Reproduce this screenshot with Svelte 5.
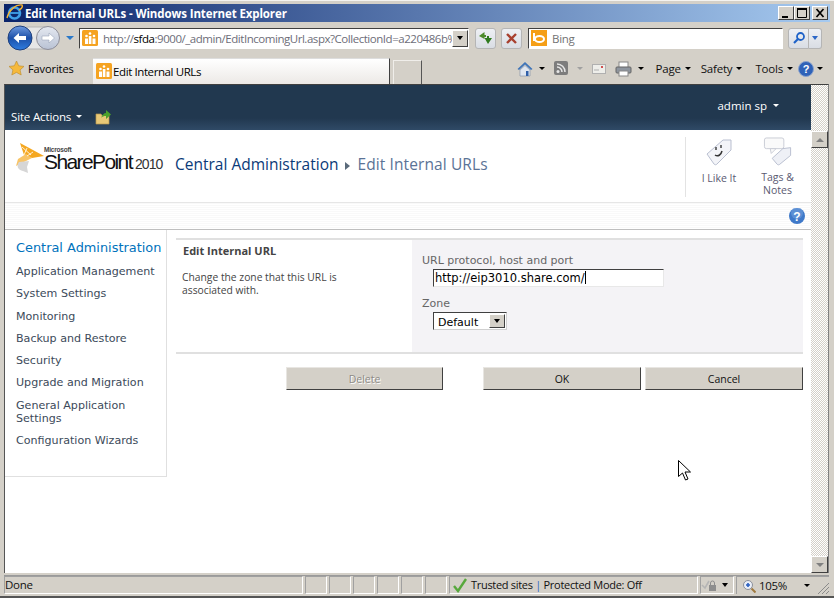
<script lang="ts">
  const nav = [
    'Application Management',
    'System Settings',
    'Monitoring',
    'Backup and Restore',
    'Security',
    'Upgrade and Migration',
    'General Application Settings',
    'Configuration Wizards'
  ]
  const statusCells = [0, 1, 2, 3, 4, 5]
</script>

<style>
  :global(body) { margin: 0; background: #d4d0c8; }
  .window {
    width: 834px;
    height: 598px;
    box-sizing: border-box;
    padding: 4px 5px 0 4px;
    background: #d4d0c8;
    border-top: 1px solid #f4f3f0;
    border-bottom: 2px solid #555;
    display: flex;
    flex-direction: column;
    position: relative;
    overflow: hidden;
    font-family: "Open Sans", "Noto Sans", sans-serif;
    letter-spacing: -0.3px;
    color: #000;
  }

  .titlebar {
    height: 18px;
    flex: none;
    margin: -1px -1px 0 0;
    display: flex;
    align-items: center;
    background: linear-gradient(90deg, #0a246a, #a6caf0);
    color: #fff;
    font: bold 11.5px "Open Sans", sans-serif;
    letter-spacing: -0.11px;
  }
  .ie { width: 17px; height: 18px; margin: -2px 2px 0 2px; flex: none; }
  .winbtns { margin-left: auto; display: flex; margin-right: 2px; }
  .winbtn {
    width: 16px; height: 14px;
    box-sizing: border-box;
    background: #d4d0c8;
    border: 1px solid;
    border-color: #fff #404040 #404040 #fff;
    display: block;
  }
  .winbtn svg { display: block; }
  .winbtn.close { margin-left: 2px; }

  .addressbar {
    height: 32px;
    flex: none;
    display: flex;
    align-items: center;
  }
  .nav-orb { width: 73px; height: 28px; flex: none; margin: 0 1px; }
  .address {
    width: 390px;
    height: 21px;
    box-sizing: border-box;
    background: #fff;
    border: 1px solid;
    border-color: #404040 #fff #fff #404040;
    display: flex;
    align-items: center;
    font-size: 11.5px;
    color: #6d6d78;
    white-space: nowrap;
    overflow: hidden;
  }
  .address .url { flex: 1; min-width: 0; margin-left: 5px; letter-spacing: -0.46px; }
  .address b { font-weight: 400; color: #000; }
  .fav { width: 16px; height: 16px; flex: none; margin-left: 2px; }
  .combo {
    width: 16px; height: 17px;
    flex: none;
    box-sizing: border-box;
    background: #d4d0c8;
    border: 1px solid;
    border-color: #fff #404040 #404040 #fff;
    display: flex;
    align-items: center;
    justify-content: center;
  }
  .arrow {
    width: 0; height: 0;
    border: 3px solid transparent;
    border-top: 4px solid #000;
    border-bottom: 0;
    display: inline-block;
  }
  .toolbtn {
    width: 21px; height: 21px;
    flex: none;
    box-sizing: border-box;
    border: 1px solid #b5b5b5;
    border-radius: 3px;
    background: linear-gradient(#eef0f4, #d9dde4);
    display: flex;
    align-items: center;
    justify-content: center;
  }
  .refresh { margin-left: 6px; }
  .stop { margin-left: 5px; }
  .search {
    width: 255px;
    height: 21px;
    box-sizing: border-box;
    margin-left: 6px;
    background: #fff;
    border: 1px solid;
    border-color: #404040 #fff #fff #404040;
    display: flex;
    align-items: center;
    font-size: 11.5px;
    color: #737373;
  }
  .search svg { margin: 0 5px 0 2px; }
  .searchgo { margin-left: 5px; width: 21px; border-radius: 3px 0 0 3px; }
  .searchdrop { width: 13px; border-left: 0; border-radius: 0 3px 3px 0; }
  .searchdrop .arrow { border-top-color: #2c67c7; }

  .tabrow {
    height: 30px;
    flex: none;
    display: flex;
    align-items: flex-end;
    font-size: 11.5px;
  }
  .favorites {
    width: 89px;
    height: 30px;
    flex: none;
    display: flex;
    align-items: center;
    gap: 4px;
    padding: 0 0 2px 5px;
    box-sizing: border-box;
    font-size: 11px;
    letter-spacing: -0.1px;
  }
  .tab {
    width: 297px;
    height: 26px;
    flex: none;
    box-sizing: border-box;
    background: linear-gradient(#fff, #ece9e6);
    border-right: 1px solid #404040;
    border-top: 1px solid #ddd;
    display: flex;
    align-items: center;
    gap: 1px;
    padding: 0 0 1px 1px;
    letter-spacing: -0.4px;
  }
  .newtab {
    width: 29px;
    height: 24px;
    flex: none;
    margin-left: 3px;
    box-sizing: border-box;
    border: 1px solid #f0eeea;
    border-right-color: #555;
    border-bottom: 0;
    background: #d4d0c8;
  }
  .cmdbar {
    margin-left: auto;
    height: 30px;
    display: flex;
    align-items: center;
    font-size: 11.5px;
    color: #111;
    padding-bottom: 1px;
    box-sizing: border-box;
    letter-spacing: -0.2px;
  }
  .cmd { display: flex; align-items: center; gap: 4px; margin-left: 12px; }
  .cmd .arrow { border-width: 3px; }
  .cmd.safety { margin-left: 10px; }
  .cmd.tools { margin-left: 13px; }
  .cmdicon { display: flex; align-items: center; gap: 6px; margin-left: 9px; }
  .cmdicon .arrow { border-width: 3px; }
  .cmdicon.dim .arrow { border-top-color: #a0a0a0; }
  .cmdicon.mute { margin-left: 8px; }
  .cmdicon.help { margin: 0 6px 0 5px; gap: 3px; }

  .content {
    flex: none;
    height: 489px;
    display: flex;
    border-left: 1px solid #555;
    border-top: 1px solid #404040;
    border-right: 1px solid #808080;
    background: #fff;
    box-sizing: border-box;
  }
  .page { flex: 1; min-width: 0; display: flex; flex-direction: column; font-family: "DejaVu Sans", Verdana, sans-serif; letter-spacing: 0; }

  .ribbon {
    height: 45px;
    flex: none;
    background: linear-gradient(#21384f 0, #21384f 33px, #2f4a66 100%);
    color: #fff;
    display: flex;
    align-items: flex-end;
  }
  .siteactions { display: flex; align-items: center; gap: 5px; margin: 0 0 6px 6px; font-family: "Open Sans", sans-serif; font-size: 11.5px; letter-spacing: -0.15px; }
  .siteactions .arrow { border-top-color: #fff; border-width: 3px; }
  .navup { margin: 0 0 4px 13px; }
  .user {
    align-self: flex-start;
    margin: 13px 32px 0 auto;
    display: flex;
    align-items: center;
    gap: 6px;
    font-size: 11.5px;
    font-family: "Open Sans", sans-serif;
  }
  .user .arrow { border-top-color: #fff; border-width: 3px; }

  .brand {
    height: 73px;
    flex: none;
    display: flex;
    box-sizing: border-box;
    border-bottom: 1px solid #e6e6e6;
    background: #fff;
  }
  .logo { width: 148px; flex: none; display: flex; align-items: flex-start; margin: 12px 0 0 10px; }
  .wordmark { margin: 5px 0 0 -1px; font-family: "Liberation Sans", sans-serif; color: #111; white-space: nowrap; font-size: 21px; line-height: 17px; letter-spacing: -1.6px; }
  .wordmark small { display: block; height: 6px; line-height: 6px; font-size: 6.5px; letter-spacing: -0.2px; font-weight: 700; color: #444; }
  .wordmark i { font-style: normal; font-size: 14px; letter-spacing: -0.9px; color: #333; margin-left: 3px; }
  .crumb { margin: 23px 0 0 12px; font-size: 15.5px; color: #0a3a78; white-space: nowrap; font-family: "Open Sans", sans-serif; }
  .crumb .sep { display: inline-block; width: 0; height: 0; border: 4px solid transparent; border-left: 5px solid #5a6a7a; border-right: 0; margin: 0 7px 0 7px; }
  .crumb .cur { color: #5b7396; letter-spacing: 0.1px; }
  .social {
    margin-left: auto;
    margin-top: 7px;
    height: 60px;
    border-left: 1px solid #e3e3e3;
    display: flex;
    font-family: "Open Sans", sans-serif;
    font-size: 10.5px;
    color: #5a5a72;
    text-align: center;
    line-height: 13px;
  }
  .social div { display: flex; flex-direction: column; align-items: center; }
  .social .like { width: 66px; }
  .social .tags { width: 51px; margin-right: 8px; }
  .social svg { margin-bottom: 3px; height: 32px; }

  .band {
    height: 27px;
    flex: none;
    box-sizing: border-box;
    background-image: repeating-linear-gradient(#f9f9f9 0 1px, #fff 1px 2px);
    border-bottom: 1px solid #bfbfbf;
    display: flex;
    justify-content: flex-end;
    align-items: center;
    padding-right: 6px;
  }

  .body { flex: 1; display: flex; min-height: 0; }
  .sidenav {
    width: 162px;
    height: 247px;
    flex: none;
    box-sizing: border-box;
    border-right: 1px solid #e0e0e0;
    border-bottom: 1px solid #e0e0e0;
    padding: 10px 0 0 11px;
    font-size: 11.1px;
    line-height: 13px;
    color: #3c4a5a;
  }
  .sidenav h3 { margin: 0 0 10.2px; font-size: 12.9px; font-weight: 400; line-height: 15px; color: #0072bc; white-space: nowrap; }
  .sidenav p { margin: 0 0 9.25px; }

  .main { width: 627px; margin: 8px 0 0 9px; flex: none; }
  .section {
    display: flex;
    height: 116px;
    box-sizing: border-box;
    border-top: 2px solid #e0e0e0;
    border-bottom: 2px solid #e0e0e0;
  }
  .desc { width: 236px; flex: none; padding: 4px 0 0 6px; box-sizing: border-box; font-family: "Open Sans", sans-serif; font-size: 10.3px; line-height: 13px; color: #444; }
  .desc h4 { margin: 0 0 14px 1px; font-size: 11px; font-weight: 700; color: #444; line-height: 13px; }
  .desc p { margin: 0; width: 190px; }
  .fields { flex: 1; background: #f4f3f6; padding: 14px 0 0 10px; font-size: 11px; color: #666; line-height: 14px; }
  .label { display: block; }
  .input {
    display: block;
    box-sizing: border-box;
    width: 231px;
    height: 18px;
    margin: 1px 0 10px 11px;
    padding: 0 1px;
    border: 1px solid;
    border-color: #404040 #e8e8e8 #e8e8e8 #404040;
    background: #fff;
    color: #000;
    font: 11.5px "DejaVu Sans", sans-serif;
    line-height: 17px;
  }
  .caret { display: inline-block; width: 1px; height: 13px; background: #000; vertical-align: -2px; }
  .select {
    display: flex;
    box-sizing: border-box;
    width: 74px;
    height: 18px;
    margin: 1px 0 0 11px;
    border: 1px solid;
    border-color: #404040 #d0d0d0 #d0d0d0 #404040;
    background: #fff;
    color: #000;
    font-size: 11px;
    line-height: 16px;
    padding-left: 4px;
    align-items: center;
    justify-content: space-between;
  }
  .select .val { margin-top: 3px; }
  .select .combo { width: 16px; height: 14px; margin-right: 1px; }
  .actions { display: flex; margin-top: 13px; font-family: "Open Sans", sans-serif; font-size: 10.5px; }
  .btn {
    width: 158px;
    height: 23px;
    box-sizing: border-box;
    background: #d4d0c8;
    border: 1px solid;
    border-color: #e8e6e2 #404040 #404040 #e8e6e2;
    display: flex;
    align-items: center;
    justify-content: center;
    color: #111;
  }
  .btn.delete { width: 157px; margin-left: 110px; color: #8d8b86; text-shadow: 1px 1px 0 #fff; }
  .btn.ok { margin-left: 40px; }
  .btn.cancel { margin-left: 4px; }

  .scrollbar {
    width: 17px;
    flex: none;
    display: flex;
    flex-direction: column;
    background-color: #f0efec;
    background-image: conic-gradient(#d4d0c8 25%, #fff 0 50%, #d4d0c8 0 75%, #fff 0);
    background-size: 2px 2px;
  }
  .sb {
    width: 17px; height: 17px;
    flex: none;
    box-sizing: border-box;
    background: #d4d0c8;
    border: 1px solid;
    border-color: #fff #404040 #404040 #fff;
    display: flex;
    align-items: center;
    justify-content: center;
  }
  .sb.up { margin-top: 46px; }
  .sb.down { margin-top: auto; }
  .up-arrow { width: 0; height: 0; border: 4px solid transparent; border-bottom: 4px solid #808080; border-top: 0; }
  .down-arrow { width: 0; height: 0; border: 4px solid transparent; border-top: 4px solid #808080; border-bottom: 0; }

  .statusbar {
    flex: none;
    height: 21px;
    margin-top: 2px;
    display: flex;
    border-top: 1px solid #9a9a9a;
    font-size: 11.5px;
    color: #111;
    white-space: nowrap;
  }
  .cell {
    height: 18px;
    box-sizing: border-box;
    border: 1px solid;
    border-color: #a0a0a0 #fff #fff #a0a0a0;
    display: flex;
    align-items: center;
    flex: none;
    margin-right: 2px;
  }
  .cell.done { width: 299px; padding: 0 0 1px; }
  .cell.small { width: 22px; }
  .cell.zone { width: 249px; padding: 0 0 1px 2px; gap: 3px; font-size: 11px; letter-spacing: -0.3px; }
  .cell.zone b { font-weight: 400; color: #2c67c7; }
  .cell.lock { width: 34px; gap: 3px; }
  .cell.zoom { flex: 1; margin-right: 0; gap: 3px; border-right: 0; border-bottom: 0; position: relative; padding-left: 5px; }
  .cell.zoom .arrow { margin-left: 14px; border-width: 3px; }
  .grip { position: absolute; right: 0; bottom: 0; }
  .cursor { position: absolute; left: 678px; top: 459px; }
</style>

<div class="window">
  <div class="titlebar">
    <svg class="ie" viewBox="0 0 17 18">
      <circle cx="8.500" cy="10" r="5.500" fill="none" stroke="#3fa0e8" stroke-width="2.600"/>
      <path d="M4 10h9" stroke="#3fa0e8" stroke-width="1.800"/>
      <path d="M1 15c2-8 9-14 15-13 1 2-1 4-3 5" fill="none" stroke="#f2b233" stroke-width="1.400"/>
    </svg>
    Edit Internal URLs - Windows Internet Explorer
    <div class="winbtns">
      <span class="winbtn"><svg width="14" height="12"><rect x="3" y="9" width="6" height="2" fill="#000"/></svg></span>
      <span class="winbtn"><svg width="14" height="12"><path d="M2.500 2.500h9v8h-9z" fill="none" stroke="#000"/><path d="M2 2h10" stroke="#000" stroke-width="2"/></svg></span>
      <span class="winbtn close"><svg width="14" height="12"><path d="M3.500 2l7 8M10.500 2l-7 8" stroke="#000" stroke-width="1.700"/></svg></span>
    </div>
  </div>

  <div class="addressbar">
    <svg class="nav-orb" viewBox="0 0 73 28">
      <defs>
        <linearGradient id="back" x1="0" y1="0" x2="0" y2="1"><stop offset="0" stop-color="#6f9be0"/><stop offset=".5" stop-color="#1d50a8"/><stop offset="1" stop-color="#2f7de0"/></linearGradient>
        <linearGradient id="fwd" x1="0" y1="0" x2="0" y2="1"><stop offset="0" stop-color="#e4e8f0"/><stop offset="1" stop-color="#b9c2d4"/></linearGradient>
      </defs>
      <rect x="12" y="3" width="40" height="22" rx="11" fill="#e6e6e6" stroke="#b5b5b5"/>
      <circle cx="15" cy="14" r="12" fill="url(#back)" stroke="#1e3f7c"/>
      <path d="M8.500 14l5.500-5v3h7v4h-7v3z" fill="#fff"/>
      <circle cx="43" cy="14" r="11.500" fill="url(#fwd)" stroke="#8e8e98"/>
      <path d="M49.500 14l-5.500-5v3h-7v4h7v3z" fill="#fff" stroke="#9ba6ba" stroke-width=".6"/>
      <path d="M61 12h8l-4 4z" fill="#2a78c8"/>
    </svg>
    <div class="address">
      <svg class="fav" viewBox="0 0 16 16"><rect width="16" height="16" rx="1.500" fill="#f5a321"/><path d="M3 14V8.500h3V14zM6.800 14V6h2.600v8zM10.500 14V8.500h3V14z" fill="#fff"/><circle cx="4.500" cy="6" r="1.300" fill="#fff"/><circle cx="8" cy="3.500" r="1.300" fill="#fff"/><circle cx="12" cy="6" r="1.300" fill="#fff"/></svg>
      <span class="url">http://<b>sfda</b>:9000/_admin/EditIncomingUrl.aspx?CollectionId=a220486b%</span>
      <span class="combo"><span class="arrow"></span></span>
    </div>
    <span class="toolbtn refresh"><svg width="15" height="14" viewBox="0 0 15 14"><path d="M6.500 1L1 5l5.500 3V6H8V4H6.500z" fill="#4c8a2a"/><path d="M10 13l4-6H11V5H9v2H6.500z" fill="#2f7a1f"/></svg></span>
    <span class="toolbtn stop"><svg width="13" height="13"><path d="M2 2l9 9M11 2l-9 9" stroke="#a8402f" stroke-width="2.400"/></svg></span>
    <div class="search">
      <svg width="16" height="16"><rect width="16" height="16" fill="#f59f16"/><ellipse cx="8.500" cy="9" rx="4.500" ry="3" fill="none" stroke="#fff" stroke-width="2"/><path d="M3 3v8" stroke="#fff" stroke-width="2"/></svg>
      Bing
    </div>
    <span class="toolbtn searchgo"><svg width="14" height="14"><circle cx="8.500" cy="5.500" r="3.500" fill="none" stroke="#1e62c8" stroke-width="1.800"/><path d="M6 8l-4 4" stroke="#1e62c8" stroke-width="2.200"/></svg></span>
    <span class="toolbtn searchdrop"><span class="arrow"></span></span>
  </div>

  <div class="tabrow">
    <div class="favorites">
      <svg width="15" height="15" viewBox="0 0 15 15"><path d="M7.500 0l2.200 4.800 5.300.6-3.900 3.500 1.100 5.100-4.700-2.600-4.700 2.600 1.100-5.100L0 5.400l5.300-.6z" fill="#f6b93b" stroke="#b98a2c" stroke-width=".6"/></svg>
      Favorites
    </div>
    <div class="tab">
      <svg class="fav" viewBox="0 0 16 16"><rect width="16" height="16" rx="1.500" fill="#f5a321"/><path d="M3 14V8.500h3V14zM6.800 14V6h2.600v8zM10.500 14V8.500h3V14z" fill="#fff"/><circle cx="4.500" cy="6" r="1.300" fill="#fff"/><circle cx="8" cy="3.500" r="1.300" fill="#fff"/><circle cx="12" cy="6" r="1.300" fill="#fff"/></svg>
      Edit Internal URLs
    </div>
    <div class="newtab"></div>
    <div class="cmdbar">
      <span class="cmdicon"><svg width="16" height="16" viewBox="0 0 16 16"><path d="M8 1L0.500 8 2 9l6-5.500L14 9l1.500-1z" fill="#3f74b8"/><path d="M3 9l5-4.500L13 9v6H3z" fill="#dfe6f0" stroke="#7b8ca6" stroke-width=".6"/><rect x="9" y="10" width="2.500" height="5" fill="#2f5fa8"/></svg><span class="arrow"></span></span>
      <span class="cmdicon"><svg width="15" height="15"><rect width="14" height="14" rx="2" fill="#7d7d7d"/><circle cx="4" cy="10.500" r="1.500" fill="#e6e6e6"/><path d="M3 6a5 5 0 015 5M3 3a8 8 0 018 8" fill="none" stroke="#e6e6e6" stroke-width="1.500"/></svg></span>
      <span class="cmdicon dim mute"><span class="arrow"></span></span>
      <span class="cmdicon"><svg width="14" height="10"><rect x=".5" y=".5" width="13" height="9" fill="#eeeeea" stroke="#b0b0b0"/><rect x="9" y="2" width="2" height="2" fill="#d05050"/><path d="M2 6h5" stroke="#b0b0b0"/></svg></span>
      <span class="cmdicon"><svg width="17" height="16"><rect x="4" y="1" width="9" height="6" fill="#fff" stroke="#888"/><rect x="1" y="6" width="15" height="6" rx="1" fill="#8e959e" stroke="#666"/><rect x="4" y="10" width="9" height="5" fill="#fff" stroke="#888"/></svg><span class="arrow"></span></span>
      <span class="cmd">Page <span class="arrow"></span></span>
      <span class="cmd safety">Safety <span class="arrow"></span></span>
      <span class="cmd tools">Tools <span class="arrow"></span></span>
      <span class="cmdicon help"><svg width="16" height="16"><circle cx="8" cy="8" r="7.500" fill="#2f62b8" stroke="#8aa2cc"/><text x="8" y="12" font-size="11" font-weight="700" text-anchor="middle" fill="#fff" font-family="Liberation Sans">?</text></svg><span class="arrow"></span></span>
    </div>
  </div>

  <div class="content">
    <div class="page">
      <div class="ribbon">
        <div class="siteactions">Site Actions <span class="arrow"></span></div>
        <svg class="navup" width="17" height="17" viewBox="0 0 17 17"><path d="M1 5h5l1 1.500h7V15H1z" fill="#e8c877" stroke="#b79a4d" stroke-width=".7"/><path d="M6 9c1-3 3-5 5-5V1l5 4.500L11 10V7c-2 0-4 .5-5 2z" fill="#4ca02c"/></svg>
        <div class="user">admin sp <span class="arrow"></span></div>
      </div>

      <div class="brand">
        <div class="logo">
          <svg width="30" height="32" viewBox="0 0 30 32">
            <path d="M5 1l24 13-12 2-8-3z" fill="#f5a821"/>
            <path d="M17 16L1 24l2-7 8-5z" fill="#f8c467"/>
            <path d="M4 20c-3 4-1 8 4 9l5 2-1-6 2-6z" fill="#d6d6d6"/>
            <path d="M7 5l9 8M12 6l-3 7M18 10l-6 4" stroke="#fff" stroke-width=".8"/>
          </svg>
          <div class="wordmark"><small>Microsoft</small>SharePoint<i>2010</i></div>
        </div>
        <div class="crumb">Central Administration<span class="sep"></span><span class="cur">Edit Internal URLs</span></div>
        <div class="social">
          <div class="like">
            <svg width="28" height="32" viewBox="0 0 28 32">
              <path d="M2 17L18 3h8v10L12 27c-1 1-2 1-3 0z" fill="#f3f4f8" stroke="#b9bfd0"/>
              <path d="M11 10v3M16 8v3" stroke="#444" stroke-width="1.500"/>
              <path d="M10 18c3 2 6 0 7-4" fill="none" stroke="#333" stroke-width="1.500"/>
            </svg>
            I Like It
          </div>
          <div class="tags">
            <svg width="30" height="32" viewBox="0 0 30 32">
              <rect x="1" y="1" width="20" height="11" rx="2" fill="#fafafa" stroke="#c9ccd6"/>
              <path d="M9 22l11-10 8-1v8L17 28c-1 1-2 1-3 0z" fill="#eef0f6" stroke="#b9bfd0"/>
              <path d="M7 12l6 0-5 5z" fill="#fafafa" stroke="#c9ccd6"/>
            </svg>
            Tags &amp;<br />Notes
          </div>
        </div>
      </div>

      <div class="band">
        <svg width="16" height="16"><circle cx="8" cy="8" r="8" fill="#3f79c9"/><circle cx="8" cy="5" r="6" fill="#7aa6e0" opacity=".5"/><text x="8" y="12.500" font-size="12" font-weight="700" text-anchor="middle" fill="#fff" font-family="Liberation Sans">?</text></svg>
      </div>

      <div class="body">
        <div class="sidenav">
          <h3>Central Administration</h3>
          {#each nav as item}
            <p>{item}</p>
          {/each}
        </div>
        <div class="main">
          <div class="section">
            <div class="desc">
              <h4>Edit Internal URL</h4>
              <p>Change the zone that this URL is associated with.</p>
            </div>
            <div class="fields">
              <span class="label">URL protocol, host and port</span>
              <span class="input">http://eip3010.share.com/<span class="caret"></span></span>
              <span class="label">Zone</span>
              <span class="select"><span class="val">Default</span> <span class="combo"><span class="arrow"></span></span></span>
            </div>
          </div>
          <div class="actions">
            <div class="btn delete">Delete</div>
            <div class="btn ok">OK</div>
            <div class="btn cancel">Cancel</div>
          </div>
        </div>
      </div>
    </div>
    <div class="scrollbar">
      <div class="sb up"><span class="up-arrow"></span></div>
      <div class="sb down"><span class="down-arrow"></span></div>
    </div>
  </div>

  <div class="statusbar">
    <div class="cell done">Done</div>
    {#each statusCells as c (c)}
      <div class="cell small"></div>
    {/each}
    <div class="cell zone">
      <svg width="16" height="16"><path d="M2 9l4 5 8-12" fill="none" stroke="#57a83c" stroke-width="2.400"/></svg>
      <span>Trusted sites <b>|</b> Protected Mode: Off</span>
    </div>
    <div class="cell lock">
      <svg width="18" height="16"><path d="M1 8l3 3 4-7" fill="none" stroke="#b5b5b5" stroke-width="1.600"/><rect x="8" y="8" width="7" height="6" fill="#8e8e8e"/><path d="M9.500 8V6a2 2 0 014 0v2" fill="none" stroke="#8e8e8e"/></svg>
      <span class="arrow"></span>
    </div>
    <div class="cell zoom">
      <svg width="14" height="14"><circle cx="6" cy="6" r="4.500" fill="#e9eef8" stroke="#8b8f99"/><path d="M4 6h4M6 4v4" stroke="#2a5fc0" stroke-width="1.600"/><path d="M9.500 9.500l4 4" stroke="#a07a40" stroke-width="2"/></svg>
      105%
      <span class="arrow"></span>
      <svg class="grip" width="12" height="12"><path d="M1 12L12 1M5 12l7-7M9 12l3-3" stroke="#8a8a8a"/></svg>
    </div>
  </div>

  <svg class="cursor" width="14" height="22" viewBox="0 0 14 22"><path d="M.5.500v16l4-3.500 3 7 2.500-1-3-7h5.500z" fill="#fff" stroke="#000"/></svg>
</div>
